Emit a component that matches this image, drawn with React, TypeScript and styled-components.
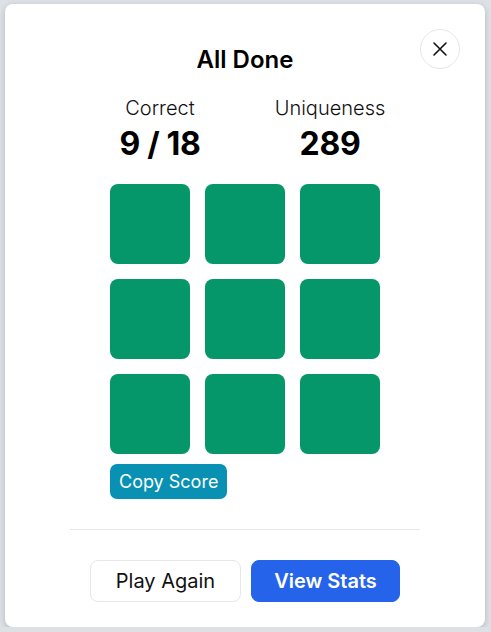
import React from 'react';
import styled, { createGlobalStyle } from 'styled-components';

const GlobalStyle = createGlobalStyle`
	html, body {
		margin: 0;
		padding: 0;
		background: #dde1e5;
		font-family: Inter, "Noto Sans", sans-serif;
		color: #111;
	}
`;

const Page = styled.div`
	padding: 4px 6px 0 5px;
`;

const Modal = styled.div`
	position: relative;
	box-sizing: border-box;
	width: 480px;
	height: 623px;
	padding-top: 40px;
	background: #fff;
	border-radius: 8px;
	box-shadow: 0 2px 6px rgba(0, 0, 0, 0.18);
	display: flex;
	flex-direction: column;
	align-items: center;
`;

const CloseButton = styled.button`
	position: absolute;
	top: 25px;
	right: 25px;
	width: 40px;
	height: 40px;
	border-radius: 50%;
	border: 1px solid #e5e7eb;
	background: #fff;
	display: flex;
	align-items: center;
	justify-content: center;
	padding: 0;
	cursor: pointer;
`;

const Title = styled.h2`
	margin: 0;
	font-size: 24px;
	line-height: 32px;
	font-weight: 600;
	color: #000;
`;

const Stats = styled.div`
	display: flex;
	gap: 20px;
	margin-top: 18px;
`;

const Stat = styled.div`
	width: 150px;
	display: flex;
	flex-direction: column;
	align-items: center;
`;

const StatLabel = styled.div`
	font-size: 20px;
	line-height: 28px;
	font-weight: 300;
`;

const StatValue = styled.div`
	margin-top: 4px;
	font-size: 32px;
	line-height: 36px;
	font-weight: 700;
	letter-spacing: -0.3px;
	color: #000;
`;

const Board = styled.div`
	width: 270px;
	margin-top: 22px;
	display: flex;
	flex-direction: column;
	align-items: flex-start;
	gap: 10px;
`;

const Grid = styled.div`
	display: grid;
	grid-template-columns: repeat(3, 80px);
	grid-auto-rows: 80px;
	gap: 15px;
`;

const Tile = styled.div<{ $correct: boolean }>`
	border-radius: 8px;
	background: ${(p) => (p.$correct ? '#059669' : '#dc2626')};
`;

const CopyButton = styled.button`
	height: 35px;
	padding: 0 9px;
	border: none;
	border-radius: 7px;
	background: #0891b2;
	color: #fff;
	font-family: inherit;
	font-size: 18px;
	cursor: pointer;
`;

const Divider = styled.hr`
	width: 350px;
	margin: 30px 0 0;
	border: none;
	border-top: 1px solid #e5e7eb;
`;

const Actions = styled.div`
	display: flex;
	gap: 10px;
	margin-top: 30px;
`;

const ActionButton = styled.button<{ $primary?: boolean }>`
	height: 42px;
	width: ${(p) => (p.$primary ? '149px' : '151px')};
	border-radius: 8px;
	font-family: inherit;
	font-size: 20px;
	cursor: pointer;
	border: 1px solid ${(p) => (p.$primary ? '#2563eb' : '#e5e7eb')};
	background: ${(p) => (p.$primary ? '#2563eb' : '#fff')};
	color: ${(p) => (p.$primary ? '#fff' : '#111')};
	font-weight: ${(p) => (p.$primary ? 600 : 400)};
`;

const results = [true, true, true, true, true, true, true, true, true];

const App = () => (
	<Page>
		<GlobalStyle />
		<Modal>
			<CloseButton aria-label="Close">
				<svg width="16" height="16" viewBox="0 0 16 16" fill="none" stroke="#111" strokeWidth="1.6" strokeLinecap="round">
					<path d="M2 2 L14 14 M14 2 L2 14" />
				</svg>
			</CloseButton>
			<Title>All Done</Title>
			<Stats>
				<Stat>
					<StatLabel>Correct</StatLabel>
					<StatValue>9 / 18</StatValue>
				</Stat>
				<Stat>
					<StatLabel>Uniqueness</StatLabel>
					<StatValue>289</StatValue>
				</Stat>
			</Stats>
			<Board>
				<Grid>
					{results.map((ok, i) => (
						<Tile key={i} $correct={ok} />
					))}
				</Grid>
				<CopyButton>Copy Score</CopyButton>
			</Board>
			<Divider />
			<Actions>
				<ActionButton>Play Again</ActionButton>
				<ActionButton $primary>View Stats</ActionButton>
			</Actions>
		</Modal>
	</Page>
);

export default App;
